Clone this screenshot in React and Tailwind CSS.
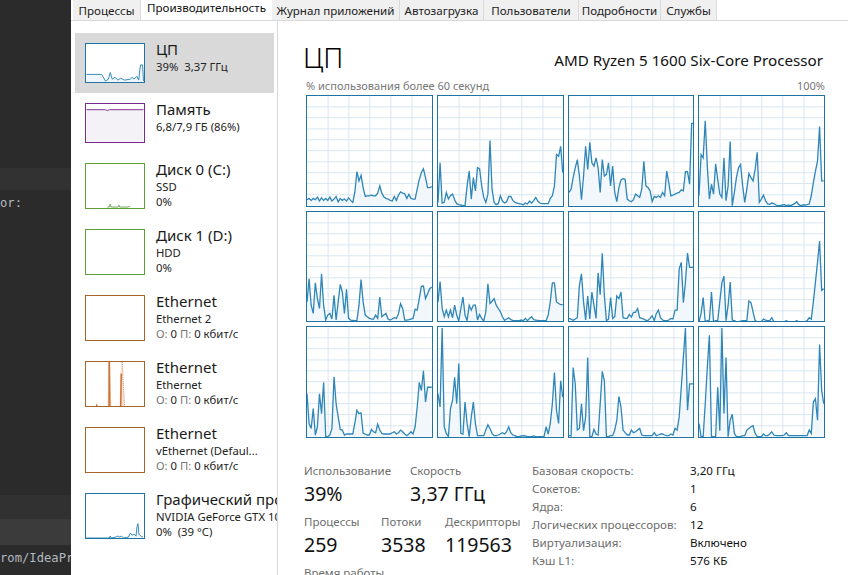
import React from 'react';

const tabs = [
  { label: 'Процессы', w: 'w-[68px]' },
  { label: 'Производительность', w: 'w-[131px]', active: true },
  { label: 'Журнал приложений', w: 'w-[128px]' },
  { label: 'Автозагрузка', w: 'w-[84px]' },
  { label: 'Пользователи', w: 'w-[95px]' },
  { label: 'Подробности', w: 'w-[82px]' },
  { label: 'Службы', w: 'w-[56px]' },
];

// 61 samples per core, height in a 378x333 box
const cores = [
  [18,22,16,22,18,26,14,24,16,22,16,26,14,20,28,12,22,16,20,14,24,16,10,40,103,75,92,55,28,30,30,32,30,30,38,60,38,26,22,20,16,14,28,16,32,42,38,36,22,34,22,20,20,50,80,100,112,85,55,55,58],
  [10,130,8,10,40,20,30,35,18,6,3,2,0,0,60,105,20,85,45,115,112,60,25,10,35,198,50,10,3,6,30,14,8,12,28,28,16,10,8,6,5,3,8,5,14,8,15,25,14,8,6,6,6,6,22,30,60,155,150,180,100],
  [40,50,85,115,140,90,18,90,180,110,192,130,120,145,115,40,140,90,95,130,60,120,40,12,55,78,82,80,20,15,12,18,35,30,25,50,135,60,55,45,12,28,25,30,25,40,30,105,70,30,32,35,38,40,48,45,103,103,65,250,250],
  [30,155,145,258,120,20,65,35,127,80,35,25,145,15,60,195,0,40,85,115,125,60,10,50,97,85,75,110,162,10,20,32,15,5,4,8,6,2,0,0,2,3,0,2,0,3,6,12,3,0,2,2,3,5,30,70,105,135,240,75,75],
  [60,130,50,25,118,70,40,145,50,5,20,25,8,80,5,60,113,90,25,98,10,5,4,3,3,50,128,60,20,15,10,8,8,20,10,75,15,20,25,8,5,8,12,10,25,55,40,5,5,6,8,10,38,35,70,107,108,70,85,100,105],
  [60,122,40,15,35,15,35,12,50,20,2,40,75,20,3,50,35,50,50,5,22,10,2,30,115,55,62,70,50,40,30,15,4,8,12,6,4,3,3,3,5,3,10,3,10,15,6,5,4,3,3,3,3,20,60,118,118,60,55,52,52],
  [10,8,4,8,12,110,145,60,5,78,8,90,50,10,148,82,208,80,3,8,73,10,15,78,70,90,12,10,10,22,14,28,28,40,12,10,8,4,4,10,18,3,25,35,12,5,3,3,5,10,8,35,35,160,180,58,120,208,165,165,165],
  [0,25,73,0,3,5,90,0,3,3,60,118,138,3,50,120,5,3,0,0,2,3,3,3,63,58,30,3,0,0,0,8,5,3,3,12,0,0,0,0,0,0,3,0,0,0,0,3,0,0,0,0,3,12,8,60,120,180,245,95,100],
  [130,40,25,85,5,30,130,70,165,0,0,5,25,182,100,60,22,20,5,8,8,8,8,40,80,70,72,10,8,5,5,22,15,12,38,20,10,8,8,8,8,12,15,8,12,20,15,8,3,8,15,8,30,90,165,140,200,105,150,150,150],
  [130,90,330,30,10,0,85,110,180,100,222,10,8,105,40,0,60,105,40,3,3,3,3,20,36,25,10,3,3,5,8,12,8,15,30,12,5,3,0,0,2,3,2,0,0,0,2,0,0,0,0,0,30,8,40,100,195,80,40,170,120],
  [3,2,210,160,20,25,100,18,60,240,0,0,22,8,5,100,198,170,0,0,3,3,20,50,122,90,20,12,5,5,20,12,15,20,25,5,3,3,3,3,3,12,3,5,8,8,5,3,3,8,5,25,20,60,150,240,330,80,160,160,160],
  [40,0,0,100,210,308,0,0,0,150,18,330,70,240,0,50,68,10,0,0,0,3,3,20,25,30,33,10,0,0,0,8,3,3,8,15,5,3,3,3,3,5,12,3,3,3,3,3,3,3,3,3,3,20,10,105,115,50,280,140,100],
];

const Core = ({ data }) => {
  const line = data.map((h, i) => `${(i * 6.3).toFixed(1)},${333 - h}`).join(' ');
  const hLines = [33, 66, 100, 133, 166, 200, 233, 266, 300];
  const vLines = [64, 127, 190, 254, 318];
  return (
    <div className="border border-[#1f74a3] bg-white min-w-0">
      <svg viewBox="0 0 378 333" preserveAspectRatio="none" className="w-full h-full block">
        {hLines.map((y) => (
          <line key={y} x1="0" x2="378" y1={y} y2={y} stroke="#d9e6f0" strokeWidth="1" vectorEffect="non-scaling-stroke" />
        ))}
        {vLines.map((x) => (
          <line key={x} x1={x} x2={x} y1="0" y2="333" stroke="#d9e6f0" strokeWidth="1" vectorEffect="non-scaling-stroke" />
        ))}
        <polygon points={`0,333 ${line} 378,333`} fill="#f1f6fb" fillOpacity="0.9" />
        <polyline points={line} fill="none" stroke="#2f86b8" strokeWidth="1.3" vectorEffect="non-scaling-stroke" />
      </svg>
    </div>
  );
};

const CpuThumb = () => (
  <svg viewBox="0 0 60 40" className="w-full h-full block">
    <polygon points="0,32 16,32 20,39 23,37 25,30 27,37 30,35 33,38 36,36 40,38 46,37 48,35 50,37 53,34 55,38 56,28 57,22 59,22 60,39 60,40 0,40" fill="#f1f6fb" />
    <polyline points="0,32 16,32 20,39 23,37 25,30 27,37 30,35 33,38 36,36 40,38 46,37 48,35 50,37 53,34 55,38 56,28 57,22 59,22 60,39" fill="none" stroke="#2f86b8" strokeWidth="1" />
  </svg>
);

const MemThumb = () => (
  <svg viewBox="0 0 60 40" className="w-full h-full block">
    <polygon points="0,6 20,6 22,7 24,6 60,6 60,40 0,40" fill="#f4f2f6" />
    <polyline points="0,6 20,6 22,7 24,6 60,6" fill="none" stroke="#7a2a8e" strokeWidth="1" />
  </svg>
);

const DiskThumb = () => (
  <svg viewBox="0 0 60 46" className="w-full h-full block">
    <polyline points="22,45 24,45 25,42 26,45 33,45 34,43 35,45 44,45 45,44 46,45" fill="none" stroke="#6aa84f" strokeWidth="1" />
  </svg>
);

const EthThumb = () => (
  <svg viewBox="0 0 60 46" className="w-full h-full block">
    <polygon points="10,46 11,43 12,46" fill="#b9703a" />
    <polygon points="23,0 25,0 26,46 22.5,46" fill="#eba77a" />
    <line x1="24" x2="24" y1="0" y2="46" stroke="#c05f25" strokeWidth="1" />
    <polygon points="36.5,0 37.5,0 40,46 34.5,46" fill="#f8e2d3" />
    <line x1="36.5" x2="36" y1="12" y2="46" stroke="#c96a2d" strokeWidth="1.5" />
    <line x1="37.5" x2="40" y1="0" y2="46" stroke="#d98a5c" strokeWidth="1" strokeDasharray="1 1" />
  </svg>
);

const GpuThumb = () => {
  const pts = '0,46 24,46 25,44 26,46 31,45 33,44 35,45 37,44 39,46 44,45 46,41 48,43 50,42 52,44 53,34 54,31 55,42 57,44 59,45';
  return (
    <svg viewBox="0 0 60 46" className="w-full h-full block">
      <polygon points={`${pts} 60,46`} fill="#f1f6fb" />
      <polyline points={pts} fill="none" stroke="#2f86b8" strokeWidth="1" />
    </svg>
  );
};

const Speed = () => (
  <>
    <span className="text-[#777]">О:</span> 0 <span className="text-[#777]">П:</span> 0 кбит/с
  </>
);

const items = [
  { title: 'ЦП', lines: ['39%  3,37 ГГц'], color: 'border-[#1f74a3]', thumb: <CpuThumb />, selected: true, short: true },
  { title: 'Память', lines: ['6,8/7,9 ГБ (86%)'], color: 'border-[#7a2a8e]', thumb: <MemThumb />, short: true },
  { title: 'Диск 0 (C:)', lines: ['SSD', '0%'], color: 'border-[#5f9e34]', thumb: <DiskThumb /> },
  { title: 'Диск 1 (D:)', lines: ['HDD', '0%'], color: 'border-[#5f9e34]' },
  { title: 'Ethernet', lines: ['Ethernet 2', <Speed key="s" />], color: 'border-[#a5642a]' },
  { title: 'Ethernet', lines: ['Ethernet', <Speed key="s" />], color: 'border-[#a5642a]', thumb: <EthThumb /> },
  { title: 'Ethernet', lines: ['vEthernet (Defaul...', <Speed key="s" />], color: 'border-[#a5642a]' },
  { title: 'Графический процессор 0', lines: ['NVIDIA GeForce GTX 1060 6GB', '0%  (39 °C)'], color: 'border-[#1f74a3]', thumb: <GpuThumb /> },
];

const SideItem = ({ item }) => (
  <div className={`flex w-[199px] pl-[10px] pt-[6px] gap-[11px] ${item.short ? 'h-[60px]' : 'h-[66px]'} ${item.selected ? 'bg-[#d9d9d9]' : ''}`}>
    <div className={`w-[60px] shrink-0 mt-[4px] border bg-white ${item.color} ${item.short ? 'h-[40px]' : 'h-[46px]'}`}>
      {item.thumb}
    </div>
    <div className="whitespace-nowrap">
      <div className="text-[15px] leading-[20px] text-[#1a1a1a]">{item.title}</div>
      {item.lines.map((l, i) => (
        <div key={i} className="text-[11.3px] leading-[15px] text-[#222] whitespace-pre">{l}</div>
      ))}
    </div>
  </div>
);

const Stat = ({ label, value, className }) => (
  <div className={className}>
    <div className="text-[11.5px] leading-[16px] text-[#6e6e6e] whitespace-nowrap">{label}</div>
    <div className="text-[19.5px] leading-[26px] mt-[2px] text-[#111] whitespace-nowrap">{value}</div>
  </div>
);

const specs = [
  ['Базовая скорость:', '3,20 ГГц'],
  ['Сокетов:', '1'],
  ['Ядра:', '6'],
  ['Логических процессоров:', '12'],
  ['Виртуализация:', 'Включено'],
  ['Кэш L1:', '576 КБ'],
  ['Кэш L2:', '3,0 МБ'],
];

export default function App() {
  return (
    <div className="flex w-[848px] h-[575px] overflow-hidden bg-white font-['Noto_Sans',sans-serif]">
      {/* editor behind the window */}
      <div className="w-[71px] shrink-0 bg-[#2b2b2b] overflow-hidden flex flex-col font-['DejaVu_Sans_Mono',monospace] text-[12.2px] text-[#b4bac0]">
        <div className="h-[168px] shrink-0" />
        <div className="h-[22px] shrink-0 bg-[#323232]" />
        <div className="h-[26px] shrink-0 leading-[26px]">or:</div>
        <div className="h-[279px] shrink-0" />
        <div className="h-[24px] shrink-0 bg-[#313131]" />
        <div className="h-[26px] shrink-0 bg-[#3b3b3b]" />
        <div className="shrink-0 leading-[26px] whitespace-nowrap">rom/IdeaProjects</div>
      </div>

      <div className="flex-1 min-w-0 flex flex-col">
        <div className="flex h-[21px] shrink-0 pl-[2px] border-b border-[#d9d9d9] bg-white">
          {tabs.map((t) => (
            <div
              key={t.label}
              className={`${t.w} shrink-0 text-center text-[11.6px] whitespace-nowrap ${
                t.active ? 'bg-white leading-[16px] text-[#111]' : 'bg-[#f0f0f0] border-r border-[#d9d9d9] leading-[22px] text-[#222]'
              }`}
            >
              {t.label}
            </div>
          ))}
        </div>

        <div className="flex flex-1 min-h-0">
          <div className="w-[207px] shrink-0 pl-[4px] pt-[12px] border-r border-[#d9d9d9] overflow-hidden">
            {items.map((item, i) => (
              <SideItem key={i} item={item} />
            ))}
          </div>

          <div className="flex-1 min-w-0 pl-[28px] pr-[23px] overflow-hidden">
            <div className="flex items-end justify-between h-[56px] -ml-[3px] pr-[2px]">
              <div className="text-[28px] leading-[40px] font-light text-black">ЦП</div>
              <div className="text-[15.2px] leading-[24px] mb-[5px] text-[#111]">AMD Ryzen 5 1600 Six-Core Processor</div>
            </div>
            <div className="flex justify-between text-[11px] leading-[18px] h-[18px] text-[#777]">
              <span>% использования более 60 секунд</span>
              <span>100%</span>
            </div>
            <div className="grid grid-cols-4 grid-rows-3 gap-[4px] h-[343px]">
              {cores.map((data, i) => (
                <Core key={i} data={data} />
              ))}
            </div>

            <div className="flex mt-[25px] -ml-[2px]">
              <div className="w-[228px] shrink-0">
                <div className="flex">
                  <Stat label="Использование" value="39%" className="w-[106px]" />
                  <Stat label="Скорость" value="3,37 ГГц" />
                </div>
                <div className="flex mt-[7px]">
                  <Stat label="Процессы" value="259" className="w-[77px]" />
                  <Stat label="Потоки" value="3538" className="w-[64px]" />
                  <Stat label="Дескрипторы" value="119563" />
                </div>
                <div className="text-[11.5px] leading-[16px] mt-[7px] text-[#6e6e6e]">Время работы</div>
              </div>
              <div className="flex-1 -mt-[1px]">
                {specs.map(([k, v]) => (
                  <div key={k} className="flex h-[18px] items-center text-[11.6px] whitespace-nowrap">
                    <span className="w-[158px] shrink-0 text-[#6e6e6e]">{k}</span>
                    <span className="text-[#111]">{v}</span>
                  </div>
                ))}
              </div>
            </div>
          </div>
        </div>
      </div>
    </div>
  );
}
